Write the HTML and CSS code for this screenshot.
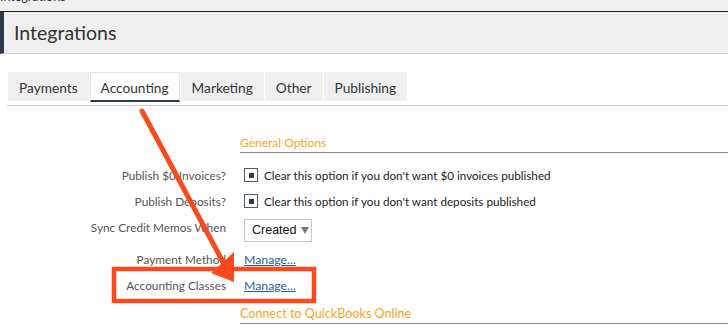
FILE: index.html
```html
<!DOCTYPE html>
<html lang="en">
<head>
    <meta charset="UTF-8">
    <meta name="viewport" content="width=device-width, initial-scale=1.0">
    <title>Integrations</title>
    <link rel="stylesheet" href="styles.css">
</head>
<body>
    <div class="page">
        <div class="app-bar"><span>Integrations</span></div>
        <header class="page-header">
            <h1>Integrations</h1>
        </header>

        <nav class="tabs">
            <a class="tab" href="#">Payments</a>
            <a class="tab active" href="#">Accounting</a>
            <a class="tab" href="#">Marketing</a>
            <a class="tab" href="#">Other</a>
            <a class="tab" href="#">Publishing</a>
        </nav>
        <div class="tab-rule"></div>

        <main class="settings">
            <h2 class="section-title">General Options</h2>
            <div class="field">
                <label>Publish $0 Invoices?</label>
                <div class="field-value"><span class="check"></span>Clear this option if you don't want $0 invoices published</div>
            </div>
            <div class="field">
                <label>Publish Deposits?</label>
                <div class="field-value"><span class="check"></span>Clear this option if you don't want deposits published</div>
            </div>
            <div class="field field-select">
                <label>Sync Credit Memos When</label>
                <div class="field-value">
                    <span class="dropdown">Created<span class="caret"></span></span>
                </div>
            </div>
            <div class="field">
                <label>Payment Method</label>
                <div class="field-value"><a href="#">Manage...</a></div>
            </div>
            <div class="field">
                <label>Accounting Classes</label>
                <div class="field-value"><a href="#">Manage...</a></div>
            </div>
            <h2 class="section-title connect">Connect to QuickBooks Online</h2>
        </main>

        <!-- annotation drawn over the page -->
        <svg class="annotation" width="728" height="333" viewBox="0 0 728 333">
            <rect x="114" y="269" width="200" height="32" fill="none" stroke="#fa4a1d" stroke-width="4.5"/>
            <line x1="142" y1="111" x2="223" y2="262" stroke="#fa4a1d" stroke-width="5" stroke-linecap="round"/>
            <polygon points="211,273 234,252 234,282" fill="#fa4a1d"/>
        </svg>
    </div>
</body>
</html>
```

FILE: styles.css
```css
body {
    margin: 0;
    background-color: #fff;
    font-family: 'Lato', 'Open Sans', sans-serif;
    color: #333;
}
.page {
    position: relative;
    width: 728px;
    height: 333px;
    overflow: hidden;
}
.app-bar {
    height: 11px;
    background-color: #efefef;
    border-bottom: 1px solid #1d1d1d;
    overflow: hidden;
}
.app-bar span {
    display: block;
    margin-top: -10px;
    font-size: 12.5px;
    line-height: 14px;
    color: #333;
}
.page-header {
    height: 41px;
    background-color: #efefef;
    border-left: 4px solid #2b3a4a;
    border-bottom: 1px solid #cfcfcf;
    padding-left: 10px;
}
.page-header h1 {
    margin: 0;
    font-size: 19.5px;
    font-weight: normal;
    line-height: 41px;
    color: #333;
}
.tabs {
    display: flex;
    gap: 1px;
    margin-top: 18px;
    padding-left: 8px;
    height: 30px;
}
.tab {
    display: block;
    box-sizing: border-box;
    height: 29px;
    padding: 0 11px;
    background-color: #efefef;
    color: #333;
    font-size: 13.7px;
    line-height: 31px;
    text-decoration: none;
}
.tab.active {
    height: 30px;
    background-color: #fff;
    border: 1px solid #e4e4e4;
    border-bottom: 2px solid #2b3a4a;
    padding: 0 10px;
    line-height: 29px;
}
.tab-rule {
    margin: 3px 0 0 7px;
    border-top: 1px solid #cfcfcf;
}
.settings {
    padding-top: 29px;
}
.section-title {
    margin: 0 0 9px 240px;
    padding-bottom: 1px;
    font-size: 12px;
    font-weight: normal;
    line-height: 16px;
    color: #f5a623;
    border-bottom: 1px solid #8a8a8a;
}
.section-title.connect {
    margin-top: 8px;
    font-size: 12.6px;
}
.field {
    display: flex;
    align-items: center;
    height: 26px;
}
.field label {
    width: 226px;
    text-align: right;
    font-size: 11.8px;
    color: #555;
}
.field-select {
    height: 32px;
}
.field-select label {
    margin-bottom: 6px;
}
.field-value {
    display: flex;
    align-items: center;
    margin-left: 18px;
    font-size: 11.7px;
    color: #222;
}
.field-value a {
    color: #1f5da6;
    font-size: 12.3px;
}
.check {
    box-sizing: border-box;
    display: flex;
    align-items: center;
    justify-content: center;
    width: 14px;
    height: 14px;
    border: 1px solid #5a5a5a;
    margin-right: 6px;
}
.check::after {
    content: '';
    width: 5px;
    height: 5px;
    background-color: #2c3e50;
}
.dropdown {
    display: flex;
    align-items: center;
    box-sizing: border-box;
    width: 68px;
    height: 23px;
    padding-left: 7px;
    border: 1px solid #c8c8c8;
    font-family: 'Liberation Sans', Arial, sans-serif;
    font-size: 12.5px;
    color: #111;
}
.caret {
    margin-left: 5px;
    border-left: 4px solid transparent;
    border-right: 4px solid transparent;
    border-top: 7px solid #7a7a7a;
}
.annotation {
    position: absolute;
    top: 0;
    left: 0;
    pointer-events: none;
}
```
